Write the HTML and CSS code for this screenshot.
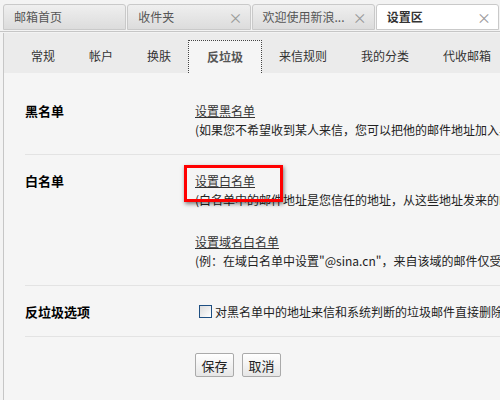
FILE: index.html
```html
<!DOCTYPE html>
<html lang="zh-CN">
<head>
    <meta charset="UTF-8">
    <title>设置区</title>
    <link rel="stylesheet" href="styles.css">
</head>
<body>
    <div class="page-tabs">
        <div class="page-tab">邮箱首页</div>
        <div class="page-tab">收件夹<span class="close">×</span></div>
        <div class="page-tab">欢迎使用新浪...<span class="close">×</span></div>
        <div class="page-tab active">设置区<span class="close">×</span></div>
    </div>

    <div class="main">
        <div class="sub-tabs">
            <div class="sub-tab">常规</div>
            <div class="sub-tab">帐户</div>
            <div class="sub-tab">换肤</div>
            <div class="sub-tab active">反垃圾</div>
            <div class="sub-tab">来信规则</div>
            <div class="sub-tab">我的分类</div>
            <div class="sub-tab">代收邮箱</div>
        </div>

        <div class="content">
            <div class="row">
                <div class="label">黑名单</div>
                <div class="field">
                    <a href="#" class="link">设置黑名单</a>
                    <div class="desc">(如果您不希望收到某人来信，您可以把他的邮件地址加入黑名单)</div>
                </div>
            </div>

            <div class="row">
                <div class="label">白名单</div>
                <div class="field">
                    <span class="marked"><a href="#" class="link">设置白名单</a></span>
                    <div class="desc">(白名单中的邮件地址是您信任的地址，从这些地址发来的邮件不会被当作垃圾邮件)</div>
                    <a href="#" class="link sub-link">设置域名白名单</a>
                    <div class="desc">(例：在域白名单中设置"@sina.cn"，来自该域的邮件仅受黑名单限制)</div>
                </div>
            </div>

            <div class="row">
                <div class="label">反垃圾选项</div>
                <div class="field">
                    <label class="check"><input type="checkbox">对黑名单中的地址来信和系统判断的垃圾邮件直接删除</label>
                </div>
            </div>

            <div class="buttons">
                <button>保存</button>
                <button>取消</button>
            </div>
        </div>
    </div>
</body>
</html>
```

FILE: styles.css
```css
* {
    margin: 0;
    padding: 0;
    box-sizing: border-box;
}

body {
    width: 500px;
    height: 400px;
    overflow: hidden;
    background-color: #f3f3f3;
    font-family: "Noto Sans CJK SC", "DejaVu Sans", sans-serif;
    font-size: 12px;
    color: #333;
}

/* верхние вкладки */
.page-tabs {
    display: flex;
    height: 32px;
    padding: 4px 0 0 3px;
    border-bottom: 1px solid #c6c6c6;
}

.page-tab {
    position: relative;
    width: 124px;
    height: 26px;
    margin-right: 1px;
    padding-left: 10px;
    line-height: 24px;
    font-size: 12px;
    color: #555;
    border: 1px solid #c9c9c9;
    border-radius: 3px 3px 0 0;
    background: linear-gradient(#efefef, #dcdcdc);
    white-space: nowrap;
}

.page-tab.active {
    background: #fff;
    font-weight: bold;
    color: #333;
}

.close {
    position: absolute;
    right: 7px;
    top: 0;
    font-size: 14px;
    font-weight: normal;
    color: #999;
}

.main {
    margin-left: 3px;
    margin-top: 1px;
    height: 367px;
    border-left: 1px solid #c6c6c6;
    background-color: #f5f5f5;
}

/* вкладки настроек */
.sub-tabs {
    display: flex;
    height: 40px;
    margin-top: 1px;
    padding: 7px 0 0 10px;
    background-color: #ebebeb;
    white-space: nowrap;
}

.sub-tab {
    padding: 0 17px;
    line-height: 32px;
    font-size: 12px;
    color: #333;
}

.sub-tab.active {
    padding: 0 18px;
    background-color: #f5f5f5;
    border: 1px dotted #444;
    border-bottom: none;
    font-weight: bold;
    color: #555;
}

.content {
    padding: 12px 0 0 21px;
}

.row {
    display: flex;
    padding: 16px 0 15px;
    border-bottom: 1px solid #e3e3e3;
    line-height: 19px;
}

.label {
    width: 170px;
    flex-shrink: 0;
    font-size: 13px;
    font-weight: bold;
    color: #000;
}

.field {
    white-space: nowrap;
}

.link {
    color: #333;
    text-decoration: underline;
}

.sub-link {
    display: inline-block;
    margin-top: 23px;
}

.desc {
    color: #222;
}

/* красная рамка вокруг ссылки */
.marked {
    position: relative;
}

.marked::after {
    content: "";
    position: absolute;
    left: -11px;
    top: -7px;
    width: 93px;
    height: 31px;
    border: 3px solid #f00;
    box-shadow: 1px 2px 4px rgba(0, 0, 0, 0.5);
}

.check {
    display: flex;
    align-items: center;
    color: #222;
}

.check input {
    appearance: none;
    width: 13px;
    height: 13px;
    margin: 0 3px 0 4px;
    border: 1px solid #1e4f82;
    background: linear-gradient(135deg, #dcdcdc, #fff);
}

.buttons {
    display: flex;
    gap: 8px;
    padding: 16px 0 0 170px;
}

.buttons button {
    width: 39px;
    height: 24px;
    font-family: "Noto Sans CJK SC", "DejaVu Sans", sans-serif;
    font-size: 13px;
    color: #222;
    border: 1px solid #aaa;
    border-radius: 2px;
    background: linear-gradient(#fff, #e6e6e6);
}
```
